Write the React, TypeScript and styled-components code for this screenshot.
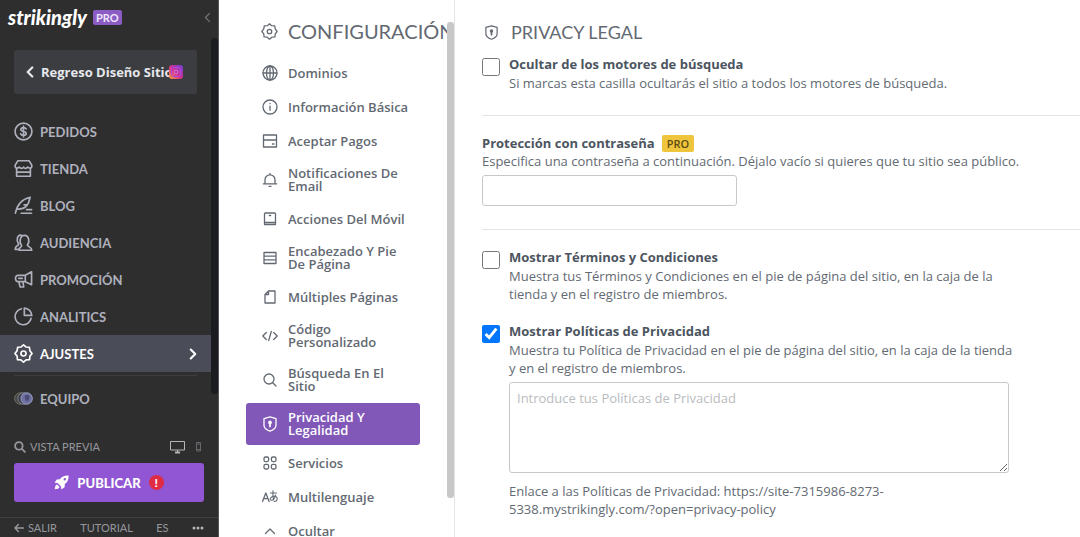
import React from "react";
import styled, { createGlobalStyle, css } from "styled-components";

const sans = '"Open Sans", "Noto Sans", sans-serif';
const display = 'Lato, "Open Sans", sans-serif';

const GlobalStyle = createGlobalStyle`
  *, *::before, *::after { box-sizing: border-box; }
  body { margin: 0; background: #fff; font-family: ${sans}; }
  h1, h2, p, ul { margin: 0; padding: 0; }
  ul { list-style: none; }
  button { font: inherit; cursor: pointer; }
`;

const Page = styled.div`
  display: flex;
  height: 100vh;
  overflow: hidden;
`;

/* ---------- Sidebar ---------- */

const Sidebar = styled.aside`
  display: flex;
  flex: none;
  flex-direction: column;
  width: 219px;
  background: #2e2e2e;
  border-right: 1px solid #55555a;
  font-family: ${display};
`;

const Brand = styled.header`
  display: flex;
  flex: none;
  align-items: center;
  gap: 6px;
  height: 38px;
  padding: 0 5px 4px 8px;
`;

const Logo = styled.a`
  color: #fff;
  font-family: ${display};
  font-size: 20px;
  font-style: italic;
  font-weight: 900;
  line-height: 24px;
  text-decoration: none;
`;

const PlanBadge = styled.span`
  padding: 0 3px;
  border-radius: 2px;
  background: #8a5cc4;
  color: #f0e6fa;
  font-size: 11px;
  font-weight: 700;
  line-height: 15px;
`;

const IconButton = styled.button<{ $dim?: boolean }>`
  display: flex;
  padding: 0;
  border: 0;
  background: none;
  color: ${(p) => (p.$dim ? "#66676c" : "#b5b5b8")};
`;

const Collapse = styled(IconButton)`
  margin-left: auto;
  color: #77787c;
`;

const SideScroll = styled.div`
  display: flex;
  flex: none;
`;

const SideBody = styled.div`
  flex: 1;
  min-width: 0;
  padding-top: 12px;
`;

const SideThumb = styled.div`
  width: 7px;
  margin-bottom: 23px;
  border-radius: 4px;
  background: #1b1c1f;
`;

const BackButton = styled.button`
  display: flex;
  position: relative;
  align-items: center;
  gap: 5px;
  width: calc(100% - 28px);
  height: 44px;
  margin: 0 14px 19px;
  padding: 0 10px;
  border: 0;
  border-radius: 3px;
  background: #3c3d40;
  color: #e6e8ee;
  font-family: ${sans};
  font-size: 13px;
  font-weight: 700;
  white-space: nowrap;
`;

const SocialMark = styled.span`
  display: flex;
  position: absolute;
  right: 14px;
  top: 15px;
`;

const NavLink = styled.a<{ $active?: boolean }>`
  display: flex;
  align-items: center;
  gap: 7px;
  height: 37px;
  padding: 0 12px 0 14px;
  background: ${(p) => (p.$active ? "#4a4c57" : "transparent")};
  color: ${(p) => (p.$active ? "#fff" : "#aeb1bd")};
  font-size: 13px;
  font-weight: 700;
  text-decoration: none;
  svg:last-child:not(:first-child) { margin-left: auto; }
`;

const NavRule = styled.hr`
  height: 1px;
  margin: 3px 14px 4px;
  border: 0;
  background: #3d3e43;
`;

const PreviewRow = styled.div`
  display: flex;
  align-items: center;
  gap: 10px;
  height: 24px;
  margin: auto 16px 4px 14px;
  color: #96979d;
`;

const TextLink = styled.a`
  display: flex;
  align-items: center;
  gap: 4px;
  color: #96979d;
  font-size: 11px;
  line-height: 16px;
  text-decoration: none;
`;

const PreviewLink = styled(TextLink)`
  margin-right: auto;
`;

const PublishButton = styled.button`
  display: flex;
  flex: none;
  align-items: center;
  justify-content: center;
  gap: 8px;
  height: 39px;
  margin: 0 14px 15px;
  border: 0;
  border-radius: 3px;
  background: #9156d3;
  color: #fff;
  font-size: 13px;
  font-weight: 900;
`;

const Alert = styled.span`
  width: 15px;
  border-radius: 50%;
  background: #e02b45;
  font-size: 12px;
  line-height: 15px;
  text-align: center;
`;

const SideFooter = styled.footer`
  display: flex;
  flex: none;
  align-items: center;
  justify-content: space-between;
  height: 20px;
  padding: 0 14px;
  border-top: 1px solid #3f4043;
`;

/* ---------- Settings menu ---------- */

const SettingsPanel = styled.section`
  display: flex;
  flex: none;
  width: 236px;
  border-right: 1px solid #e4e4e6;
  background: #fff;
`;

const SettingsBody = styled.div`
  flex: 1;
  min-width: 0;
  overflow: hidden;
  padding: 19px 27px 0;
`;

const SettingsThumb = styled.div`
  flex: none;
  width: 7px;
  margin: 22px 0 39px;
  border-radius: 3px;
  background: #c8c8c8;
`;

const Heading = styled.div<{ $large?: boolean }>`
  display: flex;
  align-items: center;
  color: #636972;
  h1, h2 {
    font-family: ${display};
    font-weight: 400;
    line-height: 24px;
    white-space: nowrap;
  }
  svg { flex: none; }
  ${(p) =>
    p.$large
      ? css`
          gap: 10px;
          padding: 0 0 14px 15px;
          h2 { font-size: 20px; }
        `
      : css`
          gap: 12px;
          padding-left: 2px;
          h1 { font-size: 18px; }
        `}
`;

const Menu = styled.ul`
  display: flex;
  flex-direction: column;
  gap: 2px;
`;

const MenuLink = styled.a<{ $active?: boolean }>`
  display: flex;
  align-items: center;
  gap: 10px;
  padding: 8px 8px 8px 16px;
  border-radius: 3px;
  background: ${(p) => (p.$active ? "#8158b8" : "transparent")};
  color: ${(p) => (p.$active ? "#fff" : "#636972")};
  font-size: 13px;
  font-weight: 600;
  line-height: 13px;
  text-decoration: none;
  svg { flex: none; }
`;

/* ---------- Content ---------- */

const Content = styled.main`
  flex: 1;
  min-width: 0;
  padding: 20px 0 0 27px;
  color: #636a73;
  font-size: 13px;
  line-height: 18px;
`;

const Section = styled.section<{ $ruled?: boolean; $tall?: boolean }>`
  padding: ${(p) => (p.$tall ? "18px 0 23px" : "11px 0 23px")};
  border-bottom: ${(p) => (p.$ruled ? "1px solid #e2e4e6" : "0")};
`;

const Option = styled.div`
  display: flex;
  gap: 9px;
  & + & { margin-top: 19px; }
`;

const OptionBody = styled.div`
  flex: 1;
  min-width: 0;
  max-width: 512px;
  label + p { margin-top: 1px; }
`;

const Checkbox = styled.input`
  flex: none;
  width: 18px;
  height: 18px;
  margin: 3px 0 0;
`;

const Label = styled.label`
  display: block;
  color: #4c555f;
  font-weight: 700;
`;

const LabelRow = styled.div`
  display: flex;
  align-items: center;
  gap: 7px;
`;

const ProTag = styled.span`
  padding: 0 5px;
  border-radius: 2px;
  background: #eec53c;
  color: #5e4c14;
  font-size: 11px;
  font-weight: 600;
  line-height: 17px;
`;

const fieldStyle = css`
  display: block;
  border: 1px solid #c6c9cc;
  border-radius: 3px;
  background: #fff;
  color: #4c555f;
  font-family: ${sans};
  font-size: 13px;
  line-height: 18px;
`;

const PasswordInput = styled.input`
  ${fieldStyle}
  width: 255px;
  height: 31px;
  margin-top: 5px;
  padding: 0 8px;
`;

const PolicyText = styled.textarea`
  ${fieldStyle}
  width: 100%;
  max-width: 500px;
  height: 91px;
  margin: 5px 0 9px;
  padding: 6px 7px;
  &::placeholder { color: #b9bcc0; }
`;

/* ---------- Icons ---------- */

type IconProps = { size?: number; width?: number; children: React.ReactNode };

const Icon = ({ size = 16, width = 1.3, children }: IconProps) => (
  <svg
    width={size}
    height={size}
    viewBox="0 0 16 16"
    fill="none"
    stroke="currentColor"
    strokeWidth={width}
    strokeLinecap="round"
    strokeLinejoin="round"
    aria-hidden="true"
  >
    {children}
  </svg>
);

const gear = (
  <>
    <path d="M8 .8 10 2.5 12.9 2.7 13.4 5.6 15.2 8 13.4 10.2 13.1 13.1 10.2 13.4 8 15.2 5.8 13.4 2.9 13.1 2.6 10.2 .8 8 2.6 5.6 3.1 2.7 6 2.5z" />
    <circle cx="8" cy="8" r="2.1" />
  </>
);

const shield = (
  <>
    <path d="M8 .9 14 2.6V9.3C14 12.4 11.4 14.1 8 15.2 4.6 14.1 2 12.4 2 9.3V2.6z" />
    <circle cx="8" cy="6.4" r="1.2" fill="currentColor" />
    <path d="M8 7v3.4" strokeWidth="1.8" />
  </>
);

const icons = {
  orders: (
    <>
      <circle cx="8" cy="8" r="7.1" />
      <path d="M10.3 5.8C9.8 4.9 9 4.7 8 4.7 6.7 4.7 5.8 5.3 5.8 6.3 5.8 8.7 10.3 7.3 10.3 9.7 10.3 10.7 9.3 11.3 8 11.3 6.9 11.3 6 10.9 5.6 10M8 3.4v9.2" />
    </>
  ),
  store: (
    <path d="M3.300 1.500h9.400L15 5.200v1.100c0 1.600-2.300 2-3.500.5-1 1.400-2.600 1.400-3.500 0-.9 1.400-2.500 1.400-3.500 0C3.300 8.300 1 7.900 1 6.300V5.200zM2.200 8v6.500h11.600V8M2.500 11h11" />
  ),
  blog: (
    <path d="M1.200 14.500C2 10 5 3 13.500 1 13 3 12.800 5.500 11.200 7.500H8.500M11 7.800C9.500 10.200 6.500 11 3 11M6 14.500h8.800M10.500 11.500h4.300" />
  ),
  audience: (
    <path d="M6 9.800C4.600 8.500 4.600 2 8.800 2c4.300 0 4.200 6.300 2.600 7.800-.4 1 .2 1.300 1.600 1.900 1.400.6 2 1.200 2 2.800H4.200c0-1.900.8-2.400 1.600-2.800.7-.4.900-1 .2-1.900zM6 1.800C2.300 1.400 2 6.800 3.700 9c.5 1-.2 1.400-1.200 1.900C1.200 11.500 1 12.300 1 13.800h3" />
  ),
  promo: (
    <path d="M14.800 1.500v11L9.500 9.800H3.500C.5 9.800.5 4.500 3.500 4.500h6zM9.500 4.500v5.300M4 9.800l1.200 4.500h3L7.500 9.800M4 7h3" />
  ),
  analytics: (
    <>
      <path d="M6.300 1.500A6.800 6.800 0 1 0 14.400 9.500" />
      <path d="M8.700.9a6.500 6.500 0 0 1 6.300 6.200H8.700z" />
    </>
  ),
  gear,
  shield,
  globe: (
    <>
      <circle cx="8" cy="8" r="7" />
      <ellipse cx="8" cy="8" rx="3.500" ry="7" />
      <path d="M1 8h14M8 1v14" />
    </>
  ),
  info: (
    <>
      <circle cx="8" cy="8" r="7" />
      <path d="M8 7.200v4M8 4.500v.2" />
    </>
  ),
  card: (
    <path d="M1.500 2h13v12h-13zM1.500 7h13M10.500 11h1.500" />
  ),
  bell: (
    <path d="M1.300 11.800h13.400M3 11.500V7.800a5 5 0 0 1 10 0v3.700M8 2.500V1.500M7 14.300h2" />
  ),
  phone: (
    <path d="M3.500 2h9a1 1 0 0 1 1 1v10.500h-11V3a1 1 0 0 1 1-1zM2.500 11.500h11M7.300 4.500h1.400" />
  ),
  rows: <path d="M2 2.500h12v11H2zM2 6.200h12M2 9.800h12" />,
  pages: <path d="M6.500 2H13v12H3V5.500zM6.500 2v3.500H3" />,
  code: <path d="M4.300 4.500.8 8l3.500 3.500M11.700 4.500 15.200 8l-3.500 3.500M9.300 3.500l-2.600 9" />,
  search: (
    <>
      <circle cx="7" cy="7" r="5" />
      <path d="M10.700 10.700l3.300 3.300" />
    </>
  ),
  grid: (
    <>
      <rect x="2" y="2" width="4.600" height="4.600" rx="1.500" />
      <rect x="9.400" y="2" width="4.600" height="4.600" rx="1.500" />
      <rect x="2" y="9.400" width="4.600" height="4.600" rx="1.500" />
      <rect x="9.400" y="9.400" width="4.600" height="4.600" rx="1.500" />
    </>
  ),
  language: (
    <>
      <path d="M.5 12.500 3.800 4l3.300 8.500M1.700 9.700h4.200" />
      <path
        d="M8.500 4h6M11 1.800c-.3 3.500-.2 6.200.6 9.200M13.500 6c-.6 2.800-2.500 5.300-4.300 5.300-2.200-.3-.4-4.300 3.300-4 4 .3 3.300 5-.3 5.200"
        strokeWidth="1.100"
      />
    </>
  ),
  up: <path d="M3.500 10.500 8 6l4.500 4.500" />,
};

type IconName = keyof typeof icons;

const Chevron = ({ dir, size = 12, width = 2 }: { dir: "left" | "right"; size?: number; width?: number }) => (
  <Icon size={size} width={width}>
    <path d={dir === "left" ? "M11 2 5 8l6 6" : "M5 2l6 6-6 6"} />
  </Icon>
);

const Instagram = () => (
  <svg width="14" height="14" viewBox="0 0 14 14" aria-hidden="true">
    <defs>
      <linearGradient id="social" x1="0" y1="1" x2="1" y2="0">
        <stop offset="0" stopColor="#f9a13c" />
        <stop offset="0.450" stopColor="#d92f8a" />
        <stop offset="1" stopColor="#6a3fe0" />
      </linearGradient>
    </defs>
    <rect width="14" height="14" rx="3" fill="url(#social)" />
    <rect x="2.500" y="2.500" width="9" height="9" rx="2.500" fill="none" stroke="#a94be0" />
    <circle cx="7" cy="7" r="2" fill="none" stroke="#c77be0" />
  </svg>
);

const Team = () => (
  <svg width="19" height="15" viewBox="0 0 21 16" aria-hidden="true">
    <circle cx="7" cy="8" r="6.300" fill="#45453f" stroke="#77756c" />
    <circle cx="10.500" cy="8" r="6.300" fill="#3a3c48" stroke="#8a8ca0" />
    <circle cx="14" cy="8" r="6.300" fill="#6c6fa0" stroke="#a3a6c4" />
    <path d="M12 5.500c1-2 4-2 5 0l-.5 4c-1 1.500-3 1.500-4 0z" fill="#4b4a72" />
  </svg>
);

const Rocket = () => (
  <svg width="15" height="15" viewBox="0 0 16 16" fill="currentColor" aria-hidden="true">
    <path
      fillRule="evenodd"
      d="M15.500.5C11.500.2 8.500 1.500 6.300 4.500L3 4.700.5 8.200l3.300.3 3.700 3.700.3 3.300 3.500-2.500.2-3.300C14.500 7.500 15.800 4.500 15.500.500zM11.500 3.200a1.300 1.300 0 1 1 0 2.600 1.300 1.300 0 0 1 0-2.600z"
    />
    <path d="M3.200 10C1.500 10.500 1 12.500.800 15.200 3.500 15 5.500 14.500 6 12.800z" />
  </svg>
);

const Desktop = () => (
  <svg width="15" height="14" viewBox="0 0 15 14" fill="none" stroke="currentColor" aria-hidden="true">
    <path d="M.500 1.500h14v8.500H.500zM7.500 10v2.500" />
    <path d="M5 12.500h5" strokeWidth="2" />
  </svg>
);

const Mobile = () => (
  <svg width="7" height="10" viewBox="0 0 7 10" fill="none" stroke="currentColor" aria-hidden="true">
    <path d="M1.500.500h4v8.500h-4zM1.500 2h4M1.500 7.500h4" />
  </svg>
);

/* ---------- Data ---------- */

const navItems: { label: string; icon: IconName; active?: boolean }[] = [
  { label: "PEDIDOS", icon: "orders" },
  { label: "TIENDA", icon: "store" },
  { label: "BLOG", icon: "blog" },
  { label: "AUDIENCIA", icon: "audience" },
  { label: "PROMOCIÓN", icon: "promo" },
  { label: "ANALITICS", icon: "analytics" },
  { label: "AJUSTES", icon: "gear", active: true },
];

const menuItems: { label: string; icon: IconName; active?: boolean }[] = [
  { label: "Dominios", icon: "globe" },
  { label: "Información Básica", icon: "info" },
  { label: "Aceptar Pagos", icon: "card" },
  { label: "Notificaciones De Email", icon: "bell" },
  { label: "Acciones Del Móvil", icon: "phone" },
  { label: "Encabezado Y Pie De Página", icon: "rows" },
  { label: "Múltiples Páginas", icon: "pages" },
  { label: "Código Personalizado", icon: "code" },
  { label: "Búsqueda En El Sitio", icon: "search" },
  { label: "Privacidad Y Legalidad", icon: "shield", active: true },
  { label: "Servicios", icon: "grid" },
  { label: "Multilenguaje", icon: "language" },
  { label: "Ocultar", icon: "up" },
];

export default function App() {
  return (
    <Page>
      <GlobalStyle />
      <Sidebar>
        <Brand>
          <Logo href="#">strikingly</Logo>
          <PlanBadge>PRO</PlanBadge>
          <Collapse type="button" aria-label="Contraer">
            <Chevron dir="left" width={1.6} size={11} />
          </Collapse>
        </Brand>
        <SideScroll>
          <SideBody>
            <BackButton type="button">
              <Chevron dir="left" width={3} />
              Regreso Diseño Sitio
              <SocialMark>
                <Instagram />
              </SocialMark>
            </BackButton>
            <nav>
              {navItems.map((item) => (
                <NavLink key={item.label} href="#" $active={item.active}>
                  <Icon size={19} width={1.4}>{icons[item.icon]}</Icon>
                  {item.label}
                  {item.active && <Chevron dir="right" width={2.8} />}
                </NavLink>
              ))}
              <NavRule />
              <NavLink href="#">
                <Team />
                EQUIPO
              </NavLink>
            </nav>
          </SideBody>
          <SideThumb />
        </SideScroll>
        <PreviewRow>
          <PreviewLink href="#">
            <Icon size={12} width={2.4}>
              <circle cx="6.500" cy="6.500" r="5" />
              <path d="M10.500 10.500l4 4" />
            </Icon>
            VISTA PREVIA
          </PreviewLink>
          <IconButton type="button" aria-label="Escritorio">
            <Desktop />
          </IconButton>
          <IconButton type="button" aria-label="Móvil" $dim>
            <Mobile />
          </IconButton>
        </PreviewRow>
        <PublishButton type="button">
          <Rocket />
          PUBLICAR
          <Alert>!</Alert>
        </PublishButton>
        <SideFooter>
          <TextLink href="#">
            <Icon size={10} width={2.4}>
              <path d="M15 8H1.500M7 2.500 1.500 8 7 13.500" />
            </Icon>
            SALIR
          </TextLink>
          <TextLink href="#">TUTORIAL</TextLink>
          <TextLink href="#">ES</TextLink>
          <IconButton type="button" aria-label="Más">
            <svg width="12" height="4" viewBox="0 0 12 4" fill="currentColor" aria-hidden="true">
              <circle cx="2" cy="2" r="1.500" />
              <circle cx="6" cy="2" r="1.500" />
              <circle cx="10" cy="2" r="1.500" />
            </svg>
          </IconButton>
        </SideFooter>
      </Sidebar>

      <SettingsPanel>
        <SettingsBody>
          <Heading $large>
            <Icon size={17} width={1.2}>{icons.gear}</Icon>
            <h2>CONFIGURACIÓN</h2>
          </Heading>
          <Menu>
            {menuItems.map((item) => (
              <li key={item.label}>
                <MenuLink href="#" $active={item.active}>
                  <Icon>{icons[item.icon]}</Icon>
                  {item.label}
                </MenuLink>
              </li>
            ))}
          </Menu>
        </SettingsBody>
        <SettingsThumb />
      </SettingsPanel>

      <Content>
        <Heading>
          <Icon size={15}>{icons.shield}</Icon>
          <h1>PRIVACY LEGAL</h1>
        </Heading>
        <Section $ruled>
          <Option>
            <Checkbox type="checkbox" id="hide" />
            <OptionBody>
              <Label htmlFor="hide">Ocultar de los motores de búsqueda</Label>
              <p>Si marcas esta casilla ocultarás el sitio a todos los motores de búsqueda.</p>
            </OptionBody>
          </Option>
        </Section>
        <Section $ruled $tall>
          <LabelRow>
            <Label htmlFor="password">Protección con contraseña</Label>
            <ProTag>PRO</ProTag>
          </LabelRow>
          <p>Especifica una contraseña a continuación. Déjalo vacío si quieres que tu sitio sea público.</p>
          <PasswordInput id="password" type="password" />
        </Section>
        <Section $tall>
          <Option>
            <Checkbox type="checkbox" id="terms" />
            <OptionBody>
              <Label htmlFor="terms">Mostrar Términos y Condiciones</Label>
              <p>
                Muestra tus Términos y Condiciones en el pie de página del sitio, en la caja de la tienda y en el
                registro de miembros.
              </p>
            </OptionBody>
          </Option>
          <Option>
            <Checkbox type="checkbox" id="privacy" defaultChecked />
            <OptionBody>
              <Label htmlFor="privacy">Mostrar Políticas de Privacidad</Label>
              <p>
                Muestra tu Política de Privacidad en el pie de página del sitio, en la caja de la tienda y en el
                registro de miembros.
              </p>
              <PolicyText aria-label="Políticas de Privacidad" placeholder="Introduce tus Políticas de Privacidad" />
              <p>Enlace a las Políticas de Privacidad: https://site-7315986-8273-5338.mystrikingly.com/?open=privacy-policy</p>
            </OptionBody>
          </Option>
        </Section>
      </Content>
    </Page>
  );
}
